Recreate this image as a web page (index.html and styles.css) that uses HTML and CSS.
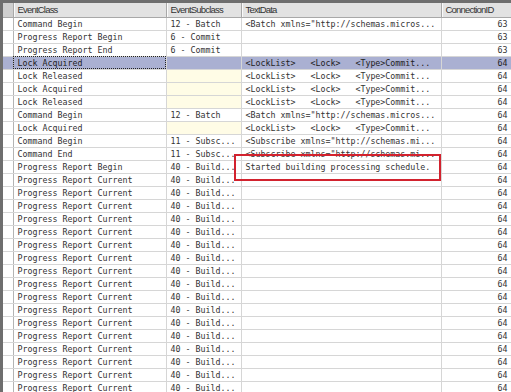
FILE: index.html
```html
<!DOCTYPE html>
<html lang="en">
<head>
    <meta charset="UTF-8">
    <title>Trace - EventClass grid</title>
    <link rel="stylesheet" href="styles.css">
</head>
<body>
    <div class="grid">
        <table class="trace">
            <colgroup>
                <col class="c-sel">
                <col class="c-class">
                <col class="c-sub">
                <col class="c-text">
                <col class="c-conn">
            </colgroup>
            <thead>
                <tr>
                    <th class="sel"></th>
                    <th>EventClass</th>
                    <th>EventSubclass</th>
                    <th>TextData</th>
                    <th>ConnectionID</th>
                </tr>
            </thead>
            <tbody>
                <tr><td class="sel"></td><td>Command Begin</td><td>12 - Batch</td><td>&lt;Batch xmlns="http://schemas.micros...</td><td class="num">63</td></tr>
                <tr><td class="sel"></td><td>Progress Report Begin</td><td>6 - Commit</td><td></td><td class="num">63</td></tr>
                <tr><td class="sel"></td><td>Progress Report End</td><td>6 - Commit</td><td></td><td class="num">63</td></tr>
                <tr class="selected"><td class="sel"></td><td class="focus">Lock Acquired</td><td></td><td>&lt;LockList&gt;   &lt;Lock&gt;   &lt;Type&gt;Commit...</td><td class="num">64</td></tr>
                <tr><td class="sel"></td><td>Lock Released</td><td class="hl"></td><td>&lt;LockList&gt;   &lt;Lock&gt;   &lt;Type&gt;Commit...</td><td class="num">64</td></tr>
                <tr><td class="sel"></td><td>Lock Acquired</td><td class="hl"></td><td>&lt;LockList&gt;   &lt;Lock&gt;   &lt;Type&gt;Commit...</td><td class="num">64</td></tr>
                <tr><td class="sel"></td><td>Lock Released</td><td class="hl"></td><td>&lt;LockList&gt;   &lt;Lock&gt;   &lt;Type&gt;Commit...</td><td class="num">64</td></tr>
                <tr><td class="sel"></td><td>Command Begin</td><td>12 - Batch</td><td>&lt;Batch xmlns="http://schemas.micros...</td><td class="num">64</td></tr>
                <tr><td class="sel"></td><td>Lock Acquired</td><td class="hl"></td><td>&lt;LockList&gt;   &lt;Lock&gt;   &lt;Type&gt;Commit...</td><td class="num">64</td></tr>
                <tr><td class="sel"></td><td>Command Begin</td><td>11 - Subsc...</td><td>&lt;Subscribe xmlns="http://schemas.mi...</td><td class="num">64</td></tr>
                <tr><td class="sel"></td><td>Command End</td><td>11 - Subsc...</td><td>&lt;Subscribe xmlns="http://schemas.mi...</td><td class="num">64</td></tr>
                <tr><td class="sel"></td><td>Progress Report Begin</td><td>40 - Build...</td><td>Started building processing schedule.</td><td class="num">64</td></tr>
                <tr><td class="sel"></td><td>Progress Report Current</td><td>40 - Build...</td><td></td><td class="num">64</td></tr>
                <tr><td class="sel"></td><td>Progress Report Current</td><td>40 - Build...</td><td></td><td class="num">64</td></tr>
                <tr><td class="sel"></td><td>Progress Report Current</td><td>40 - Build...</td><td></td><td class="num">64</td></tr>
                <tr><td class="sel"></td><td>Progress Report Current</td><td>40 - Build...</td><td></td><td class="num">64</td></tr>
                <tr><td class="sel"></td><td>Progress Report Current</td><td>40 - Build...</td><td></td><td class="num">64</td></tr>
                <tr><td class="sel"></td><td>Progress Report Current</td><td>40 - Build...</td><td></td><td class="num">64</td></tr>
                <tr><td class="sel"></td><td>Progress Report Current</td><td>40 - Build...</td><td></td><td class="num">64</td></tr>
                <tr><td class="sel"></td><td>Progress Report Current</td><td>40 - Build...</td><td></td><td class="num">64</td></tr>
                <tr><td class="sel"></td><td>Progress Report Current</td><td>40 - Build...</td><td></td><td class="num">64</td></tr>
                <tr><td class="sel"></td><td>Progress Report Current</td><td>40 - Build...</td><td></td><td class="num">64</td></tr>
                <tr><td class="sel"></td><td>Progress Report Current</td><td>40 - Build...</td><td></td><td class="num">64</td></tr>
                <tr><td class="sel"></td><td>Progress Report Current</td><td>40 - Build...</td><td></td><td class="num">64</td></tr>
                <tr><td class="sel"></td><td>Progress Report Current</td><td>40 - Build...</td><td></td><td class="num">64</td></tr>
                <tr><td class="sel"></td><td>Progress Report Current</td><td>40 - Build...</td><td></td><td class="num">64</td></tr>
                <tr><td class="sel"></td><td>Progress Report Current</td><td>40 - Build...</td><td></td><td class="num">64</td></tr>
                <tr><td class="sel"></td><td>Progress Report Current</td><td>40 - Build...</td><td></td><td class="num">64</td></tr>
                <tr><td class="sel"></td><td>Progress Report Current</td><td>40 - Build...</td><td></td><td class="num">64</td></tr>
            </tbody>
        </table>
        <!-- red callout around the schedule message -->
        <div class="callout"></div>
    </div>
</body>
</html>
```

FILE: styles.css
```css
* {
    box-sizing: border-box;
    margin: 0;
    padding: 0;
}
html, body {
    background-color: #fff;
    overflow: hidden;
}
.grid {
    position: relative;
    width: 511px;
    height: 392px;
    overflow: hidden;
    border-left: 3px solid #6e6e6e;
    border-top: 3px solid #6e6e6e;
}
.trace {
    border-collapse: collapse;
    table-layout: fixed;
    width: 518px;
}
.c-sel { width: 10px; }
.c-class { width: 153px; }
.c-sub { width: 75px; }
.c-text { width: 200px; }
.c-conn { width: 80px; }
.trace th {
    height: 14px;
    padding: 0 0 0 4px;
    background-color: #e2e2e2;
    border-right: 1px solid #a8a8a8;
    border-bottom: 1px solid #a8a8a8;
    box-shadow: inset 1px 0 0 #fafafa;
    font-family: 'Liberation Sans', Arial, sans-serif;
    font-size: 9.5px;
    font-weight: 400;
    letter-spacing: -0.8px;
    color: #333;
    text-align: left;
    white-space: nowrap;
}
.trace th.sel {
    background-color: #cfcfcf;
    box-shadow: none;
}
.trace td {
    height: 13px;
    padding: 0 4px;
    border-right: 1px solid #d6d6d6;
    border-bottom: 1px solid #d6d6d6;
    font-family: 'DejaVu Sans Mono', 'Liberation Mono', monospace;
    font-size: 8.3px;
    line-height: 12px;
    color: #333;
    white-space: pre;
    overflow: hidden;
}
.trace td.sel {
    border-right-color: #b4b4b4;
}
.trace td.num {
    text-align: right;
    padding-right: 13px;
}
.trace td.hl {
    background-color: #fffce6;
}
.trace tr.selected td {
    background-color: #aab0d2;
    color: #222;
}
.trace td.focus {
    outline: 1px dotted #222;
    outline-offset: -1px;
}
.callout {
    position: absolute;
    left: 231px;
    top: 151px;
    width: 207px;
    height: 27px;
    border: 2px solid #d2222e;
}
```
